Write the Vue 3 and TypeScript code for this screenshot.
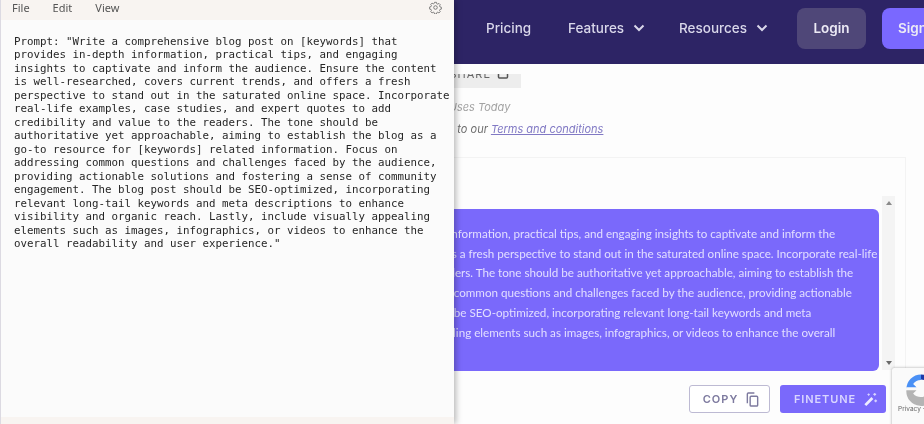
<script setup lang="ts">
const menus: string[] = ['File', 'Edit', 'View']
const note = `Prompt: "Write a comprehensive blog post on [keywords] that
provides in-depth information, practical tips, and engaging
insights to captivate and inform the audience. Ensure the content
is well-researched, covers current trends, and offers a fresh
perspective to stand out in the saturated online space. Incorporate
real-life examples, case studies, and expert quotes to add
credibility and value to the readers. The tone should be
authoritative yet approachable, aiming to establish the blog as a
go-to resource for [keywords] related information. Focus on
addressing common questions and challenges faced by the audience,
providing actionable solutions and fostering a sense of community
engagement. The blog post should be SEO-optimized, incorporating
relevant long-tail keywords and meta descriptions to enhance
visibility and organic reach. Lastly, include visually appealing
elements such as images, infographics, or videos to enhance the
overall readability and user experience."`
const lines: string[] = [
  'Prompt: Write a comprehensive blog post on [keywords] that provides in-depth information, practical tips, and engaging insights to captivate and inform the',
  'audience. Ensure the content is well-researched, covers current trends, and offers a fresh perspective to stand out in the saturated online space. Incorporate real-life',
  'examples, case studies, and expert quotes to add credibility and value to the readers. The tone should be authoritative yet approachable, aiming to establish the',
  'blog as a go-to resource for [keywords] related information. Focus on addressing common questions and challenges faced by the audience, providing actionable',
  'solutions and fostering a sense of community engagement. The blog post should be SEO-optimized, incorporating relevant long-tail keywords and meta',
  'descriptions to enhance visibility and organic reach. Lastly, include visually appealing elements such as images, infographics, or videos to enhance the overall'
]
</script>

<template>
  <div class="stage">
    <div class="page">
      <nav class="nav">
        <span class="nav-link pricing">Pricing</span>
        <span class="nav-link features">Features
          <svg class="chev" viewBox="0 0 12 8"><path d="M1.5 1.5 6 6l4.500-4.500" /></svg>
        </span>
        <span class="nav-link resources">Resources
          <svg class="chev" viewBox="0 0 12 8"><path d="M1.5 1.5 6 6l4.500-4.500" /></svg>
        </span>
        <span class="btn-login">Login</span>
        <span class="btn-sign">Sign Up</span>
      </nav>
      <main class="body">
        <div class="share">
          <span>SHARE</span>
          <svg class="share-ico" viewBox="0 0 12 12"><rect x="1.500" y="2" width="9" height="8" rx="1" /></svg>
        </div>
        <p class="uses">5 Uses Today</p>
        <p class="terms">By using this tool you agree to our <a>Terms and conditions</a></p>
        <section class="card">
          <div class="output-row">
            <div class="output">
              <div v-for="l in lines" :key="l" class="line">{{ l }}</div>
            </div>
            <div class="scroll">
              <i class="up"></i>
              <i class="down"></i>
            </div>
          </div>
          <div class="actions">
            <button class="copy">COPY
              <svg viewBox="0 0 16 16" class="ico"><rect x="5.500" y="4.500" width="8" height="10.500" rx="1" /><path d="M2.500 12V2a1 1 0 0 1 1-1h6.500" /></svg>
            </button>
            <button class="finetune">FINETUNE
              <svg viewBox="0 0 16 16" class="ico"><path class="wand" d="M2.500 14 10 6.500" /><path class="spark" d="M12.500 1v3M11 2.500h3M13.500 8v3M12 9.500h3M6 1.500v2.500M4.800 2.700h2.400" /></svg>
            </button>
          </div>
        </section>
      </main>
    </div>

    <div class="recaptcha">
      <svg viewBox="0 0 32 32" class="rc"><path d="M16 3a13 13 0 0 1 10 4.700L29 5v9H20l3-3a9 9 0 0 0-7-3.500z" fill="#1c3aa9"/><path d="M3 16A13 13 0 0 1 16 3v5a8.500 8.500 0 0 0-7 3.500l3 3H3z" fill="#4a90f5"/><path d="M3 17h9l-3 3a8.500 8.500 0 0 0 14-1h6A13 13 0 0 1 3 17z" fill="#b4b4b4"/></svg>
      <span class="rc-text">Privacy - Terms</span>
    </div>

    <div class="notepad">
      <header class="menubar">
        <span v-for="m in menus" :key="m" class="menu">{{ m }}</span>
        <svg class="gear" viewBox="0 0 16 16"><circle cx="8" cy="8" r="2.200" /><path d="M6.800 1.500h2.400l.4 1.800 1.300.6 1.600-1 1.700 1.700-1 1.600.6 1.300 1.800.4v2.400l-1.800.4-.6 1.300 1 1.600-1.700 1.700-1.600-1-1.300.6-.4 1.800H6.800l-.4-1.800-1.300-.6-1.600 1-1.700-1.700 1-1.600-.6-1.300-1.800-.4V7.500l1.800-.4.600-1.300-1-1.600 1.700-1.700 1.600 1 1.300-.6z" transform="translate(.4 .2) scale(.95)" /></svg>
      </header>
      <pre class="doc">{{ note }}</pre>
      <div class="status"></div>
    </div>
  </div>
</template>

<style>
html, body { margin: 0; background: #fff; }
</style>

<style scoped>
.stage {
  position: relative;
  width: 924px;
  height: 424px;
  overflow: hidden;
  background: #fdfdfd;
  filter: blur(0.45px);
  font-family: Inter, "Liberation Sans", sans-serif;
}
.page { width: 924px; height: 424px; display: flex; flex-direction: column; }
.nav {
  height: 64px;
  flex: none;
  background: #2d2465;
  display: flex;
  align-items: center;
  padding: 0 0 8px 486px;
  box-sizing: border-box;
  white-space: nowrap;
  color: #d9d7ea;
  font-size: 13.500px;
  font-weight: 500;
}
.nav-link { display: flex; align-items: center; flex: none; }
.pricing { width: 82px; }
.features { width: 111px; }
.resources { width: 118px; }
.chev { width: 12px; height: 8px; margin-left: 9px; fill: none; stroke: #d9d7ea; stroke-width: 2; }
.btn-login {
  flex: none;
  width: 69px; height: 41px;
  display: flex; align-items: center; justify-content: center;
  border-radius: 8px;
  background: #4f4778;
  color: #eceaf5;
  margin-right: 16px;
  font-weight: 600;
}
.btn-sign {
  flex: none;
  width: 90px; height: 41px;
  padding-left: 16px;
  box-sizing: border-box;
  display: flex; align-items: center;
  border-radius: 8px;
  background: #7a68ff;
  color: #eceaf5;
  font-weight: 600;
}
.body { flex: 1; display: flex; flex-direction: column; min-height: 0; padding-left: 75px; }
.share {
  align-self: flex-start;
  margin: 10px 0 0 300px;
  width: 146px; height: 14px;
  background: #ededed;
  display: flex;
  justify-content: flex-end;
  align-items: flex-start;
  gap: 6px;
  padding-right: 12px;
  box-sizing: border-box;
  overflow: hidden;
  font-size: 11px;
  line-height: 11px;
  color: #666;
  letter-spacing: 1px;
}
.share span { margin-top: -5px; }
.share-ico { flex: none; width: 12px; height: 12px; margin-top: -6px; fill: none; stroke: #555; stroke-width: 1.500; }
.uses {
  margin: 12px 0 0 0;
  padding-left: 364px;
  font-size: 11px;
  line-height: 14px;
  font-style: italic;
  color: #a3a3a3;
  white-space: nowrap;
}
.terms {
  margin: 8px 0 0 0;
  padding-left: 235px;
  font-size: 11px;
  line-height: 14px;
  font-style: italic;
  color: #6d6d6d;
  white-space: nowrap;
}
.terms a { color: #8179c4; text-decoration: underline; }
.card {
  margin: 21px 18px 0 -33px;
  border: 1px solid #f3f3f3;
  border-bottom: 0;
  flex: 1;
  display: flex;
  flex-direction: column;
  padding: 38px 10px 0 0;
  min-height: 0;
}
.output-row { display: flex; }
.output {
  flex: 1;
  height: 162px;
  margin-top: 13px;
  background: #7a69fb;
  border-radius: 6px;
  padding: 15px 0 0 0;
  box-sizing: border-box;
  color: #e2deff;
  font-family: Lato, "Liberation Sans", sans-serif;
  font-size: 11.650px;
  line-height: 19.700px;
  white-space: nowrap;
  overflow: hidden;
}
.scroll {
  width: 13px;
  margin-left: 3px;
  height: 174px;
  background: #f4f4f4;
  display: flex;
  flex-direction: column;
  justify-content: space-between;
  align-items: center;
  padding: 5px 0;
  box-sizing: border-box;
}
.up, .down { width: 0; height: 0; border-left: 3px solid transparent; border-right: 3px solid transparent; }
.up { border-bottom: 4px solid #8a8a8a; }
.down { border-top: 4px solid #6a6a6a; }
.actions { display: flex; justify-content: flex-end; gap: 10px; padding: 14px 9px 0 0; }
.copy, .finetune {
  height: 28px;
  border-radius: 3px;
  font: 600 11px/1 Inter, "Liberation Sans", sans-serif;
  letter-spacing: 1px;
  display: flex; align-items: center; justify-content: center; gap: 7px;
  box-sizing: border-box;
}
.copy { width: 81px; padding: 0 0 0 4px; background: #fff; border: 1.500px solid #bdbad3; color: #7d7a9f; }
.finetune { width: 106px; padding: 0 0 0 6px; background: #7a69fb; border: 0; color: #d9d5ff; letter-spacing: .9px; }
.ico { width: 15px; height: 15px; fill: none; stroke: currentColor; stroke-width: 1.500; }
.wand { stroke-width: 3; stroke: #eeecff; }
.spark { stroke-width: 1.200; }
.recaptcha {
  position: absolute;
  left: 892px; top: 368px;
  width: 60px; height: 60px;
  background: #fafafa;
  box-shadow: 0 0 3px rgba(0,0,0,.35);
  border-radius: 2px 0 0 2px;
  overflow: hidden;
}
.rc { position: absolute; left: 11px; top: 3px; width: 36px; height: 36px; }
.rc-text { position: absolute; left: 6px; top: 37px; font-size: 6.500px; color: #666; white-space: nowrap; }
.notepad {
  position: absolute;
  left: 0; top: 0;
  width: 454px; height: 424px;
  background: #fbfbfb;
  border-left: 1px solid #dcdae2;
  box-sizing: border-box;
  box-shadow: 2px 0 6px rgba(0,0,0,.28);
  display: flex;
  flex-direction: column;
  font-family: "Noto Sans", "Liberation Sans", sans-serif;
}
.menubar {
  height: 20px;
  flex: none;
  background: #f8f4f1;
  display: flex;
  align-items: center;
  padding: 0 12px 6px 11px;
  box-sizing: border-box;
  position: relative;
  font-size: 11px;
  color: #555;
}
.menu { margin-right: 23px; }
.gear { position: absolute; right: 12px; top: 1px; width: 13px; height: 13px; fill: none; stroke: #666; stroke-width: 1; }
.doc {
  flex: 1;
  margin: 0;
  padding: 15px 0 0 13px;
  font-family: "DejaVu Sans Mono", monospace;
  font-size: 10.800px;
  line-height: 13.470px;
  color: #262626;
  white-space: pre;
  overflow: hidden;
}
.status { height: 7px; flex: none; background: #f8f4f1; }
</style>
